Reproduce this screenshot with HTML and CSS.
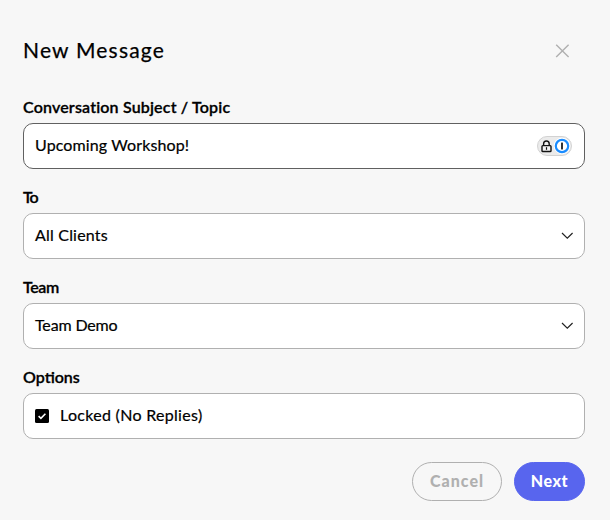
FILE: index.html
```html
<!DOCTYPE html>
<html lang="en">
<head>
<meta charset="utf-8">
<title>New Message</title>
<link rel="stylesheet" href="styles.css">
</head>
<body>
<form class="dialog">
  <header class="dialog-header">
    <h1>New Message</h1>
    <button class="close" type="button" aria-label="Close"><svg width="15" height="15" viewBox="0 0 15 15"><path d="M1.2 1.7l12.4 12.4M13.6 1.7L1.2 14.1"/></svg></button>
  </header>
  <section class="group">
    <h2><span class="label-subject">Conversation Subject / Topic</span></h2>
    <div class="field field-active"><span class="value value-subject">Upcoming Workshop!</span>
      <span class="key-badge"><svg width="35" height="20" viewBox="0 0 35 20">
        <rect x=".5" y=".5" width="34" height="19" rx="9.5" fill="#ebebeb" stroke="#d2d2d2"/>
        <path d="M6.6 9.5V7.8a2.8 2.8 0 0 1 5.6 0v1.7" fill="none" stroke="#111" stroke-width="1.4"/>
        <rect x="5" y="9.6" width="9" height="5.9" rx=".8" fill="#f4f4f4" stroke="#111" stroke-width="1.4"/>
        <path d="M9.5 11.2v2.6" stroke="#111" stroke-width="1.2"/>
        <circle cx="25" cy="10" r="8.3" fill="#fff"/>
        <circle cx="25" cy="10" r="6.2" fill="#fff" stroke="#1a8cff" stroke-width="2.2"/>
        <rect x="24" y="6.6" width="2" height="6.8" rx=".5" fill="#333"/>
      </svg></span>
    </div>
  </section>
  <section class="group">
    <h2><span class="label-to">To</span></h2>
    <div class="field"><span class="value value-to">All Clients</span><svg class="chevron" width="12" height="8" viewBox="0 0 12 8"><path d="M1 1l5.3 5.2L11.6 1"/></svg></div>
  </section>
  <section class="group">
    <h2><span class="label-team">Team</span></h2>
    <div class="field"><span class="value value-team">Team Demo</span><svg class="chevron" width="12" height="8" viewBox="0 0 12 8"><path d="M1 1l5.3 5.2L11.6 1"/></svg></div>
  </section>
  <section class="group">
    <h2><span class="label-options">Options</span></h2>
    <div class="field"><svg class="check" width="14" height="14" viewBox="0 0 14 14"><rect width="14" height="14" rx="1.5"/><path d="M3.6 7.2l2.3 2.2 4.5-4.6"/></svg><span class="value value-locked">Locked (No Replies)</span></div>
  </section>
  <footer class="actions">
    <button class="btn cancel" type="button">Cancel</button>
    <button class="btn next" type="button">Next</button>
  </footer>
</form>
</body>
</html>
```
FILE: styles.css
```css
* { box-sizing: border-box; }
body { margin: 0; background: #f7f7f7; color: #000; font-family: Lato, "Liberation Sans", sans-serif; font-variant-ligatures: none; }
.dialog { height: 520px; padding: 35px 25px 0 23px; }
.dialog-header { display: flex; justify-content: space-between; align-items: center; height: 30px; margin-bottom: 28px; padding-right: 15px; }
h1 { margin: 0; font: 400 21px/30px Lato, sans-serif; letter-spacing: 1.2px; -webkit-text-stroke: .25px #000; white-space: nowrap; }
.close { display: flex; padding: 0; border: 0; background: none; }
.close svg { fill: none; stroke: #b0b0b0; stroke-width: 1.4; }
.group { height: 90px; }
h2 { margin: 0; height: 30px; font: 600 16px/28px Lato, sans-serif; white-space: nowrap; -webkit-text-stroke: .3px #000; }
.label-subject { letter-spacing: .17px; }
.label-to { letter-spacing: -1px; }
.label-team { letter-spacing: -.4px; }
.label-options { letter-spacing: 0; }
.field { display: flex; align-items: center; height: 46px; padding: 0 11px; border: 1px solid #b0b0b0; border-radius: 10px; background: #fff; }
.field-active { padding-right: 12px; border-color: #606060; }
.value { flex: 1; padding-bottom: 2px; font-size: 16px; line-height: 24px; white-space: nowrap; -webkit-text-stroke: .2px #000; }
.value-subject { letter-spacing: .12px; }
.value-to { letter-spacing: .2px; }
.value-team { letter-spacing: -.15px; }
.value-locked { letter-spacing: .3px; }
.key-badge { display: flex; }
.chevron { fill: none; stroke: #222; stroke-width: 1.2; }
.check { margin-right: 11px; }
.check path { fill: none; stroke: #fff; stroke-width: 1.6; }
.actions { display: flex; justify-content: flex-end; gap: 12px; padding-top: 9px; }
.btn { height: 39px; padding: 0 0 2px; border: 1px solid #b0b0b0; border-radius: 20px; font: 900 16px/35px Lato, sans-serif; letter-spacing: .8px; }
.cancel { width: 90px; color: #b0b0b0; background: transparent; letter-spacing: 1px; }
.next { width: 71px; color: #fff; background: #5865ee; border-color: #5865ee; letter-spacing: .6px; }
```
